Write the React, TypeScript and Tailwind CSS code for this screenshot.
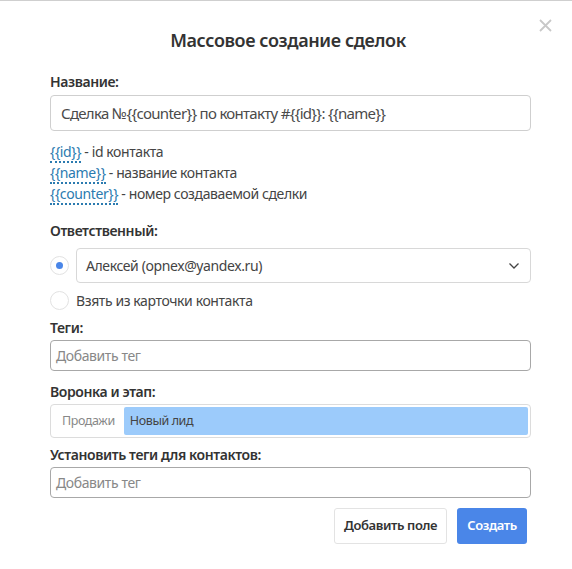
import React from "react";

const font = { fontFamily: '"Noto Sans", "Open Sans", sans-serif' };

function Hint({ code, text }: { code: string; text: string }) {
  return (
    <div className="leading-[21px]">
      <span className="text-[#2b7bb0] border-b-2 border-dotted border-[#2b7bb0]">{code}</span>
      <span className="text-[#444]"> - {text}</span>
    </div>
  );
}

export default function App() {
  return (
    <div className="w-[572px] h-[569px] bg-white border-t border-[#cfcfcf] relative text-[#333] tracking-[-0.4px]" style={font}>
      <button className="absolute right-[20px] top-[18px] text-[#c8c8c8]">
        <svg width="13" height="13" viewBox="0 0 13 13">
          <path d="M1 1 L12 12 M12 1 L1 12" stroke="#c8c8c8" strokeWidth="1.8" />
        </svg>
      </button>
      <div className="pt-[26px] text-center text-[18px] font-semibold text-[#333] leading-[26px] pl-[4px]">
        Массовое создание сделок
      </div>
      <div className="pl-[50px] pt-[19px] pr-[41px]">
        <div className="text-[14px] font-semibold text-[#333] leading-[20px]">Название:</div>
        <div className="mt-[3px] h-[36px] border border-[#cfcfcf] rounded-[4px] flex items-center px-[10px] text-[15px] tracking-[-0.7px] text-[#4a4a4a]">
          Сделка №{"{{counter}}"} по контакту #{"{{id}}"}: {"{{name}}"}
        </div>
        <div className="mt-[10px] text-[14px]">
          <Hint code="{{id}}" text="id контакта" />
          <Hint code="{{name}}" text="название контакта" />
          <Hint code="{{counter}}" text="номер создаваемой сделки" />
        </div>
        <div className="mt-[17px] text-[14px] font-semibold leading-[20px]">Ответственный:</div>
        <div className="mt-[7px] flex items-center gap-[7px]">
          <div className="w-[19px] h-[19px] rounded-full border border-[#e2e2e2] flex items-center justify-center">
            <div className="w-[7px] h-[7px] rounded-full bg-[#4a86e8]" />
          </div>
          <div className="flex-1 h-[35px] border border-[#d8d8d8] rounded-[4px] flex items-center justify-between pl-[9px] pr-[10px] text-[14px] text-[#444]">
            <span>Алексей (opnex@yandex.ru)</span>
            <svg width="12" height="8" viewBox="0 0 12 8">
              <path d="M1.5 1.5 L6 6 L10.5 1.5" stroke="#444" strokeWidth="1.3" fill="none" />
            </svg>
          </div>
        </div>
        <div className="mt-[7px] flex items-center gap-[7px]">
          <div className="w-[19px] h-[19px] rounded-full border border-[#e2e2e2]" />
          <span className="text-[14px] text-[#444]">Взять из карточки контакта</span>
        </div>
        <div className="mt-[7px] text-[14px] font-semibold leading-[20px]">Теги:</div>
        <div className="mt-[2px] h-[31px] border border-[#a8a8a8] rounded-[4px] flex items-center px-[5px] text-[14px] text-[#888]">
          Добавить тег
        </div>
        <div className="mt-[11px] text-[14px] font-semibold leading-[20px]">Воронка и этап:</div>
        <div className="mt-[2px] h-[34px] border border-[#dcdcdc] rounded-[4px] flex items-center p-[2px]">
          <span className="px-[9px] text-[12.5px] text-[#888]">Продажи</span>
          <div className="flex-1 h-full bg-[#9ccbfb] rounded-[2px] flex items-center px-[6px] text-[12.5px] text-[#444]">
            Новый лид
          </div>
        </div>
        <div className="mt-[7px] text-[14px] font-semibold leading-[20px]">Установить теги для контактов:</div>
        <div className="mt-[2px] h-[31px] border border-[#a8a8a8] rounded-[4px] flex items-center px-[5px] text-[14px] text-[#888]">
          Добавить тег
        </div>
        <div className="mt-[10px] flex justify-end gap-[10px] pr-[4px]">
          <button className="h-[36px] w-[113px] border border-[#e3e3e3] rounded-[3px] bg-white text-[13px] font-semibold text-[#333]">
            Добавить поле
          </button>
          <button className="h-[36px] w-[70px] rounded-[3px] bg-[#4a86e8] text-[13px] font-semibold text-white">
            Создать
          </button>
        </div>
      </div>
    </div>
  );
}
